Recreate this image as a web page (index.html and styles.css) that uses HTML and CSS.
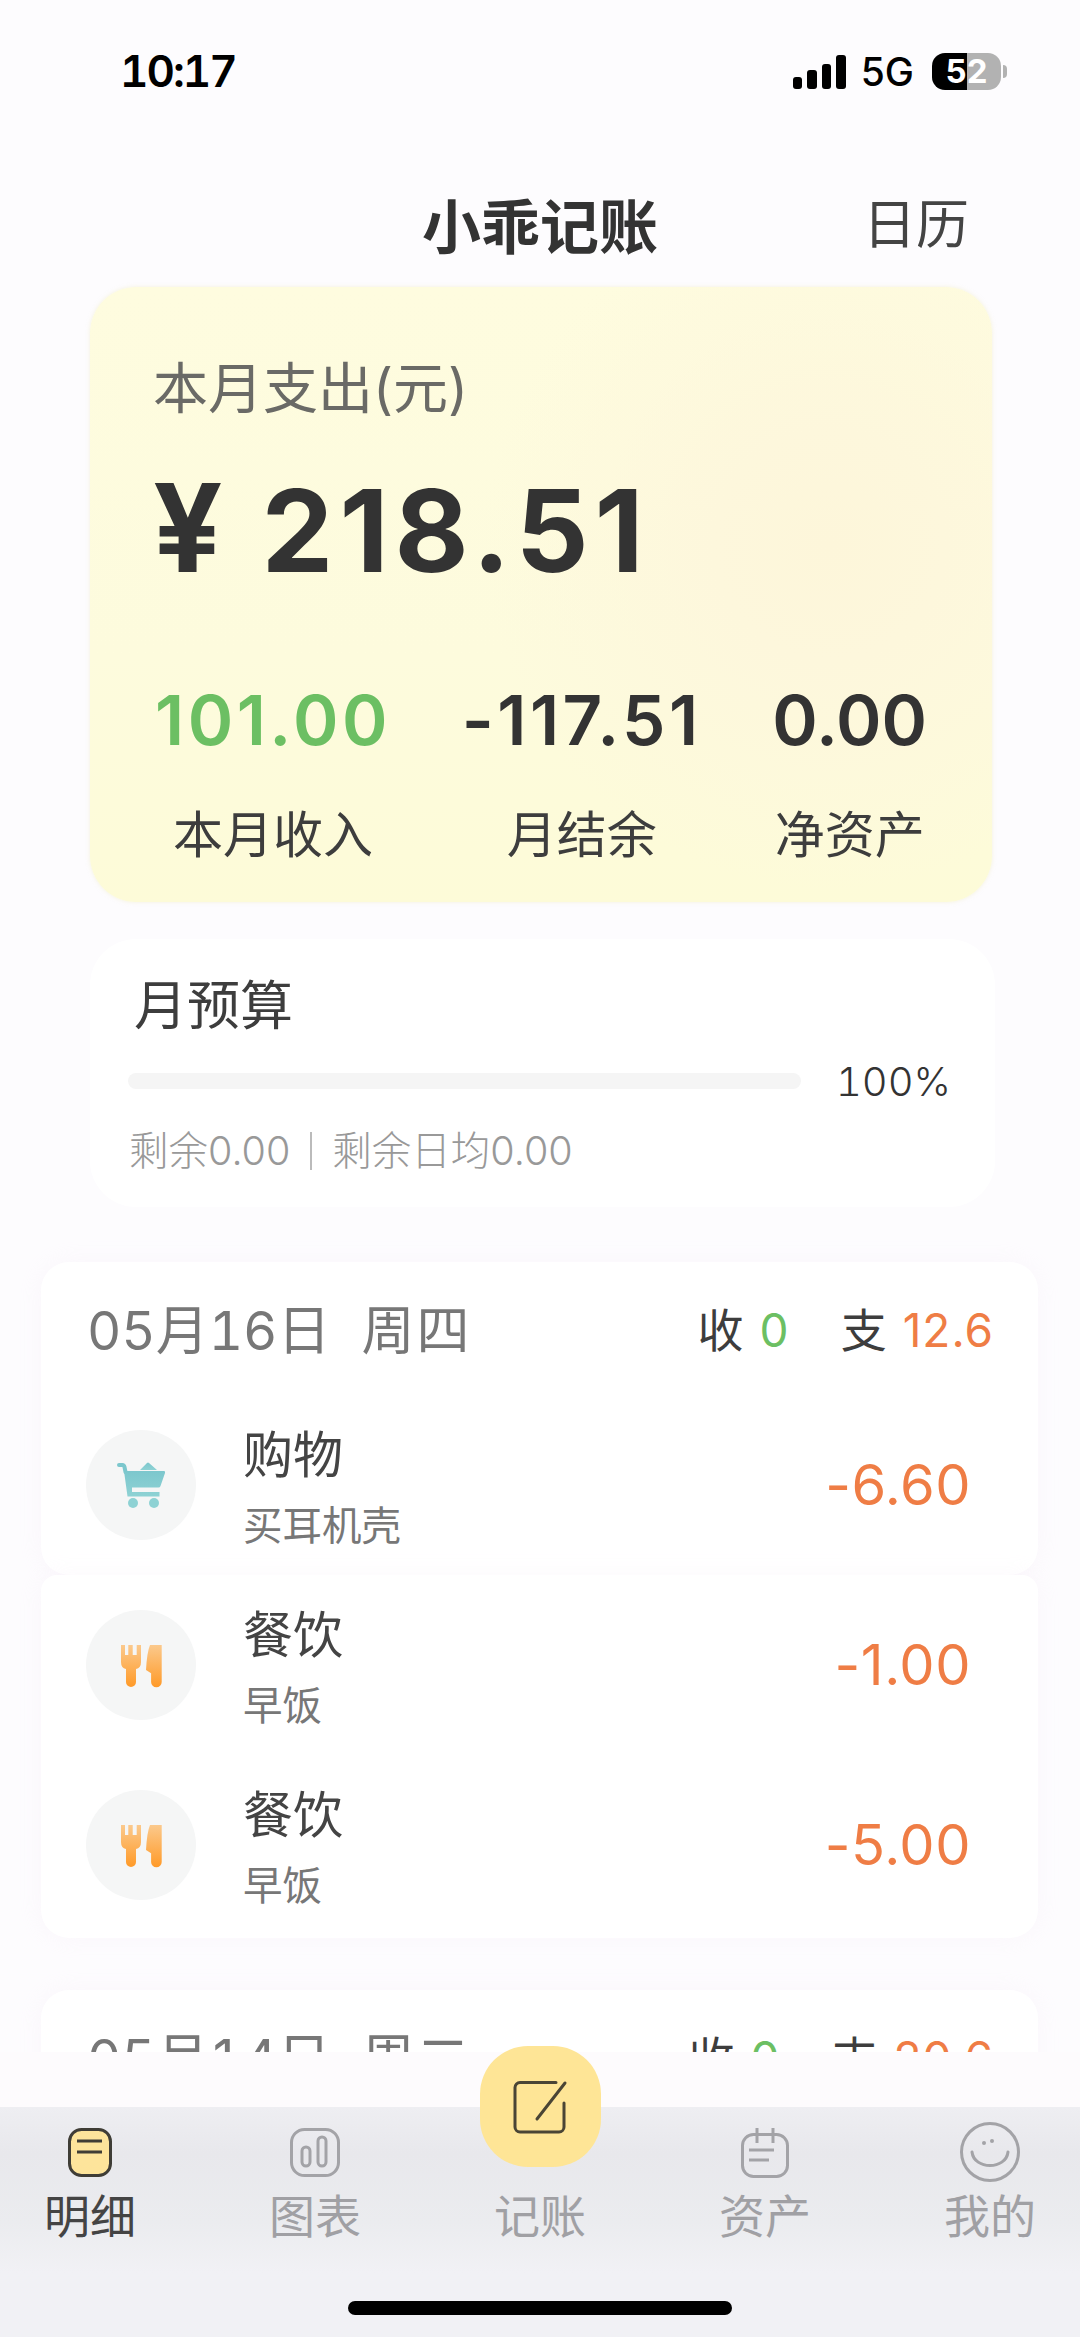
FILE: index.html
```html
<!DOCTYPE html>
<html lang="zh-CN">
<head>
    <meta charset="UTF-8">
    <meta name="viewport" content="width=device-width, initial-scale=1.0">
    <title>小乖记账</title>
    <link rel="stylesheet" href="styles.css">
</head>
<body>
    <div class="phone">
        <div class="status">
            <span class="time">10:17</span>
            <div class="status-right">
                <div class="signal"><i class="s1"></i><i class="s2"></i><i class="s3"></i><i class="s4"></i></div>
                <span class="net">5G</span>
                <div class="battery">52</div>
                <div class="nub"></div>
            </div>
        </div>

        <div class="nav">
            <h1>小乖记账</h1>
            <a class="nav-link">日历</a>
        </div>

        <div class="summary">
            <div class="summary-label">本月支出(元)</div>
            <div class="summary-amount"><span class="yen">¥</span> 218.51</div>
            <div class="stats">
                <div class="stat">
                    <div class="stat-value spaced green">101.00</div>
                    <div class="stat-name">本月收入</div>
                </div>
                <div class="stat">
                    <div class="stat-value spaced">-117.51</div>
                    <div class="stat-name">月结余</div>
                </div>
                <div class="stat">
                    <div class="stat-value">0.00</div>
                    <div class="stat-name">净资产</div>
                </div>
            </div>
        </div>

        <div class="budget">
            <div class="budget-title">月预算</div>
            <div class="budget-row">
                <div class="bar"></div>
                <span class="pct">100%</span>
            </div>
            <div class="budget-sub"><span>剩余0.00</span><i class="sep"></i><span>剩余日均0.00</span></div>
        </div>

        <div class="list">
            <div class="day">
                <div class="day-head">
                    <span class="date">05月16日<span class="week">周四</span></span>
                    <span class="totals">收<b class="green">0</b><em>支</em><b class="orange">12.6</b></span>
                </div>
                <div class="row">
                    <div class="cat">
                        <svg width="50" height="50" viewBox="0 0 50 50">
                            <defs><linearGradient id="cartFill" x1="0" y1="0" x2="0" y2="1"><stop offset="0" stop-color="#7cc7cd"/><stop offset="1" stop-color="#8ed2d4"/></linearGradient></defs>
                            <path d="M3 5h3.5q1.5 0 2 2l1 5" fill="none" stroke="#7cc7cd" stroke-width="4" stroke-linecap="round"/>
                            <path d="M24 10l7-7q1-1 2 0l8 7z" fill="url(#cartFill)"/>
                            <path d="M8 11H48q1.500 0 1 2L44.500 26q-.5 1.500-2 1.500H16V32H43.500v4.500H11.500z" fill="url(#cartFill)"/>
                            <circle cx="17" cy="43" r="5" fill="#8ed2d4"/>
                            <circle cx="38" cy="43" r="5" fill="#8ed2d4"/>
                        </svg>
                    </div>
                    <div class="row-text">
                        <div class="row-title">购物</div>
                        <div class="row-note">买耳机壳</div>
                    </div>
                    <div class="row-amount">-6.60</div>
                </div>
            </div>

            <div class="day day-next">
                <div class="row">
                    <div class="cat">
                        <svg width="50" height="50" viewBox="0 0 50 50">
                            <defs><linearGradient id="foodA" x1="0" y1="0" x2="0" y2="1"><stop offset="0" stop-color="#fbc98c"/><stop offset="1" stop-color="#ff9a28"/></linearGradient></defs>
                            <path d="M5 5H9V15H12.300V5H16.700V15H20.700V5H25V22Q25 28 20 29V42a5 5 0 0 1-10 0V29Q5 28 5 22Z" fill="url(#foodA)"/>
                            <path d="M34 5H45.700V42a5.300 5.300 0 0 1-10.600 0V33.300L30 30Q31 12 34 5Z" fill="url(#foodA)"/>
                        </svg>
                    </div>
                    <div class="row-text">
                        <div class="row-title">餐饮</div>
                        <div class="row-note">早饭</div>
                    </div>
                    <div class="row-amount">-1.00</div>
                </div>
                <div class="row">
                    <div class="cat">
                        <svg width="50" height="50" viewBox="0 0 50 50">
                            <defs><linearGradient id="foodB" x1="0" y1="0" x2="0" y2="1"><stop offset="0" stop-color="#fbc98c"/><stop offset="1" stop-color="#ff9a28"/></linearGradient></defs>
                            <path d="M5 5H9V15H12.300V5H16.700V15H20.700V5H25V22Q25 28 20 29V42a5 5 0 0 1-10 0V29Q5 28 5 22Z" fill="url(#foodB)"/>
                            <path d="M34 5H45.700V42a5.300 5.300 0 0 1-10.600 0V33.300L30 30Q31 12 34 5Z" fill="url(#foodB)"/>
                        </svg>
                    </div>
                    <div class="row-text">
                        <div class="row-title">餐饮</div>
                        <div class="row-note">早饭</div>
                    </div>
                    <div class="row-amount">-5.00</div>
                </div>
            </div>

            <div class="day day-gap">
                <div class="day-head">
                    <span class="date">05月14日<span class="week">周二</span></span>
                    <span class="totals">收<b class="green">0</b><em>支</em><b class="orange">20.6</b></span>
                </div>
            </div>
        </div>

        <div class="bottom">
            <div class="fade"></div>
            <div class="tabbar">
                <div class="tabs">
                    <div class="tab active">
                        <svg width="60" height="60" viewBox="0 0 60 60" fill="none">
                            <rect x="9.500" y="7.500" width="41" height="46" rx="12" fill="#fde49b" stroke="#3f3d36" stroke-width="3"/>
                            <path d="M17 19H42M17 30H42" stroke="#3f3d36" stroke-width="3"/>
                        </svg>
                        <span>明细</span>
                    </div>
                    <div class="tab">
                        <svg width="60" height="60" viewBox="0 0 60 60" fill="none" stroke="#a3a3a7" stroke-width="3">
                            <rect x="6.500" y="7.500" width="47" height="46" rx="13"/>
                            <rect x="17" y="25" width="8" height="19" rx="4"/>
                            <rect x="33" y="15" width="8" height="29" rx="4"/>
                        </svg>
                        <span>图表</span>
                    </div>
                    <div class="tab">
                        <div class="add">
                            <svg width="56" height="56" viewBox="0 0 56 56" fill="none" stroke="#4a4535" stroke-width="3" stroke-linecap="round">
                                <path d="M44 3.500H8a5 5 0 0 0-5 5V48a5 5 0 0 0 5 5H47a5 5 0 0 0 5-5V24"/>
                                <path d="M53 4L25 40"/>
                            </svg>
                        </div>
                        <span>记账</span>
                    </div>
                    <div class="tab">
                        <svg width="60" height="60" viewBox="0 0 60 60" fill="none" stroke="#a3a3a7" stroke-width="3">
                            <rect x="7.500" y="12.500" width="45" height="42" rx="11"/>
                            <path d="M22 6V21M38 6V21M14 28H39M14 38H34"/>
                        </svg>
                        <span>资产</span>
                    </div>
                    <div class="tab">
                        <svg width="60" height="60" viewBox="0 0 60 60" fill="none" stroke="#a3a3a7" stroke-width="3">
                            <circle cx="30" cy="30" r="28.500"/>
                            <path d="M12 30C14 48 46 48 48 30" stroke-linecap="round"/>
                            <circle cx="24" cy="21" r="2" fill="#a3a3a7" stroke="none"/>
                            <circle cx="32" cy="19" r="2" fill="#a3a3a7" stroke="none"/>
                        </svg>
                        <span>我的</span>
                    </div>
                </div>
                <div class="home-bar"></div>
            </div>
        </div>
    </div>
</body>
</html>
```

FILE: styles.css
```css
* { box-sizing: border-box; }
html, body { margin: 0; padding: 0; }
body { font-family: Inter, "Noto Sans CJK SC", sans-serif; background: #fdfcfe; color: #333; }

.phone { position: relative; width: 1080px; height: 2337px; overflow: hidden; background: #fdfcfe; }

/* status bar */
.status { display: flex; justify-content: space-between; align-items: center; height: 142px; padding: 0 73px 0 120px; color: #000; }
.time { font-size: 44px; font-weight: 600; font-variant-numeric: tabular-nums; letter-spacing: -2px; }
.status-right { display: flex; align-items: center; }
.signal { display: flex; align-items: flex-end; gap: 5px; height: 35px; }
.signal i { display: block; width: 9.500px; background: #000; border-radius: 3px; }
.s1 { height: 12px; }
.s2 { height: 19px; }
.s3 { height: 25px; }
.s4 { height: 34px; }
.net { margin-left: 15px; font-size: 39px; font-weight: 500; }
.battery { width: 69px; height: 37px; margin-left: 18px; border-radius: 13px; background: linear-gradient(90deg, #000 51%, #b2b2b2 51%); color: #fff; font-size: 33px; font-weight: 700; line-height: 37px; text-align: center; }
.nub { width: 4px; height: 13px; margin-left: 2px; border-radius: 0 4px 4px 0; background: #b2b2b2; }

/* title bar */
.nav { display: grid; grid-template-columns: 1fr auto 1fr; height: 145px; padding-top: 50px; }
.nav h1 { grid-column: 2; margin: 0; font-size: 59px; font-weight: 700; line-height: 72px; color: #333; }
.nav-link { justify-self: end; margin: -3px 111px 0 0; font-size: 53px; line-height: 72px; color: #444; }

/* month summary */
.summary { height: 615px; margin: 0 88px 0 90px; padding: 71px 65px 0; border-radius: 46px; background: radial-gradient(circle at 82% 42%, #fdf6da 0, #fdf7dc 14%, rgba(253,250,220,0) 42%), linear-gradient(180deg, #fefcdf 0%, #fdfbdd 60%, #fdfbd8 100%); box-shadow: 0 0 4px rgba(240,235,190,0.5); }
.summary-label { margin-left: -2px; font-size: 55px; line-height: 60px; color: #6a6a66; }
.summary-amount { margin-top: 50px; font-size: 114px; font-weight: 700; line-height: 120px; letter-spacing: 6px; color: #333; white-space: pre; }
.yen { font-size: 122px; margin-left: -2px; }
.stats { display: flex; justify-content: space-between; margin-top: 89px; }
.stat { text-align: center; }
.stat-value { font-size: 69px; font-weight: 600; line-height: 80px; color: #333; }
.spaced { letter-spacing: 3.500px; }
.stat-name { margin-top: 45px; font-size: 50px; line-height: 60px; color: #3d3d3d; }
.green { color: #6cbf63; }
.orange { color: #ef7d45; }
.stat-value.green { color: #6cbf63; }

/* budget */
.budget { height: 268px; margin: 37px 85px 0 90px; padding: 37px 44px 0 37px; border-radius: 46px; background: #fff; }
.budget-title { margin-left: 7px; font-size: 53px; line-height: 60px; color: #3d3d3d; }
.budget-row { display: flex; align-items: center; justify-content: space-between; height: 50px; margin-top: 20px; }
.bar { width: 673px; height: 16px; margin-left: 1px; border-radius: 8px; background: #f5f5f5; }
.pct { font-size: 40px; font-weight: 300; font-variant-numeric: tabular-nums; color: #333; }
.budget-sub { display: flex; align-items: center; margin-top: 22px; margin-left: 2px; font-size: 39.500px; font-weight: 300; line-height: 46px; color: #999; }
.sep { display: block; width: 2px; height: 38px; margin: 0 20px; background: #bbb; }

/* day cards */
.list { margin: 55px 42px 0 41px; }
.day { border-radius: 28px; background: #fff; box-shadow: 0 0 24px rgba(240,225,240,0.2); }
.day-next { padding-bottom: 3px; border-radius: 16px 16px 28px 28px; }
.day-gap { margin-top: 52px; height: 200px; }
.day-head { display: flex; align-items: center; justify-content: space-between; height: 133px; padding: 0 44px 4px 46px; }
.date { font-size: 53px; font-variant-numeric: tabular-nums; color: #777; }
.week { margin-left: 31px; letter-spacing: 2px; }
.totals { font-size: 46px; color: #3d3d3d; }
.totals b { margin-left: 16px; font-weight: 400; letter-spacing: 1px; }
.totals em { margin-left: 51px; font-style: normal; }

.row { display: flex; align-items: center; height: 180px; padding: 0 67px 0 45px; }
.cat { display: flex; align-items: center; justify-content: center; flex: none; width: 110px; height: 110px; border-radius: 50%; background: #f5f6f6; }
.row-text { flex: 1; margin-left: 47px; padding-top: 4px; }
.row-title { font-size: 50px; line-height: 62px; color: #444; }
.row-note { margin-top: 16px; font-size: 39.500px; line-height: 48px; color: #777; }
.row-amount { font-size: 56px; letter-spacing: 0.500px; color: #ef7d45; }

/* bottom tabs */
.bottom { position: absolute; left: 0; right: 0; top: 2052px; bottom: 0; }
.fade { height: 55px; background: #fdfbfd; }
.tabbar { height: 230px; background: linear-gradient(180deg, #eeeef2 0%, #e8e8ec 20%, #ebecef 50%, #f1f1f5 72%); }
.tabs { display: flex; justify-content: space-between; align-items: flex-end; height: 194px; padding: 0 45px 60px; }
.tab { display: flex; flex-direction: column; align-items: center; width: 90px; font-size: 46px; line-height: 50px; color: #a0a0a4; }
.tab span { white-space: nowrap; }
.tab svg { display: block; flex: none; }
.tab > svg { margin-bottom: 9px; }
.tab.active { color: #444; }
.add { display: flex; align-items: center; justify-content: center; flex: none; width: 121px; height: 121px; margin-bottom: 24px; border-radius: 48px; background: #fee596; }
.home-bar { width: 384px; height: 14px; margin: 0 auto; border-radius: 7px; background: #000; }
```
